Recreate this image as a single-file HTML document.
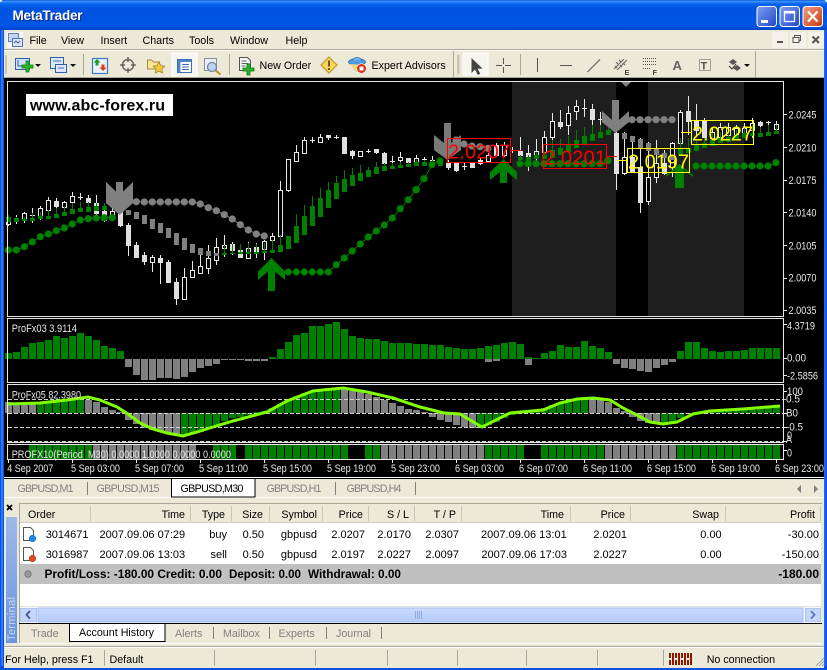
<!DOCTYPE html>
<html><head><meta charset="utf-8"><title>MetaTrader</title>
<style>
html,body{margin:0;padding:0;background:#ECE9D8;width:827px;height:670px;overflow:hidden}
svg{display:block;position:absolute;left:0;top:0}
text{font-family:"Liberation Sans",sans-serif;font-size:10.7px;fill:#000;white-space:pre}
.n{font-size:11px}
.r{text-anchor:end}
.g{fill:#808080}
.b{font-weight:bold;font-size:12px}
.w{fill:#e8e8e8;font-size:11px}
.big{font-size:20px}
.c rect,.c line,.crisp{shape-rendering:crispEdges}
</style></head><body>
<svg xmlns="http://www.w3.org/2000/svg" width="827" height="670" viewBox="0 0 827 670">
<defs>
<linearGradient id="tb" x1="0" y1="0" x2="0" y2="1">
<stop offset="0" stop-color="#0A5BD8"/><stop offset=".05" stop-color="#3D95FF"/><stop offset=".12" stop-color="#0A66EE"/><stop offset=".3" stop-color="#0053E0"/><stop offset=".85" stop-color="#0055E5"/><stop offset="1" stop-color="#0044C8"/>
</linearGradient>
<linearGradient id="tm" x1="0" y1="0" x2="0" y2="1"><stop offset="0" stop-color="#9DB9EB"/><stop offset="1" stop-color="#6A93DF"/></linearGradient>
<linearGradient id="sb" x1="0" y1="0" x2="0" y2="1"><stop offset="0" stop-color="#C9DAFC"/><stop offset="1" stop-color="#B5CCF8"/></linearGradient>
<linearGradient id="bb" x1="0" y1="0" x2="1" y2="1"><stop offset="0" stop-color="#7FA0F0"/><stop offset="1" stop-color="#1F45C8"/></linearGradient>
<linearGradient id="rb" x1="0" y1="0" x2="1" y2="1"><stop offset="0" stop-color="#F0A080"/><stop offset="1" stop-color="#C83A10"/></linearGradient>
</defs>

<!-- window frame -->
<g class="c">
<rect x="0" y="0" width="827" height="670" fill="#0A4FE0"/>
<rect x="1" y="30" width="2" height="636" fill="#2A7AF5"/>
<rect x="824" y="30" width="2" height="636" fill="#1A66EE"/>
<rect x="0" y="0" width="827" height="30" fill="url(#tb)"/>
<rect x="0" y="0" width="2" height="1" fill="#fff"/><rect x="0" y="1" width="1" height="1" fill="#fff"/>
<rect x="825" y="0" width="2" height="1" fill="#fff"/><rect x="826" y="1" width="1" height="1" fill="#fff"/>
<rect x="4" y="30" width="820" height="638" fill="#ECE9D8"/>
<rect x="4" y="50" width="820" height="1" fill="#fff"/>
<rect x="4" y="49" width="820" height="1" fill="#ACA899"/>
<rect x="4" y="77" width="820" height="1" fill="#ACA899"/>
</g>

<!-- title -->
<text x="13.5" y="21" style="font-size:13.5px;font-weight:bold;fill:#0A2A80" textLength="70">MetaTrader</text>
<text x="12.5" y="20" style="font-size:13.5px;font-weight:bold;fill:#fff" textLength="70">MetaTrader</text>
<g>
<rect x="757" y="6.5" width="19.5" height="20" rx="3" fill="url(#bb)" stroke="#fff"/>
<rect x="761" y="20" width="7" height="3" fill="#fff"/>
<rect x="780" y="6.5" width="19.5" height="20" rx="3" fill="url(#bb)" stroke="#fff"/>
<rect x="784.5" y="11.5" width="10" height="10" fill="none" stroke="#fff" stroke-width="1.3"/><rect x="784" y="11" width="11" height="2.5" fill="#fff"/>
<rect x="803" y="6.5" width="19.5" height="20" rx="3" fill="url(#rb)" stroke="#fff"/>
<path d="M808 11.5l9.5 10M817.5 11.5l-9.5 10" stroke="#fff" stroke-width="2.2"/>
</g>

<!-- menu -->
<g>
<rect x="7" y="32" width="16" height="16" fill="#F6F8FC"/>
<rect x="8.5" y="33.5" width="10" height="8" fill="#C5D6F2" stroke="#5B7FC0"/>
<rect x="12.5" y="38.5" width="10" height="8" fill="#DCE6F8" stroke="#4F75B8"/>
<path d="M14 43l2-2 2 2 2-2" stroke="#3A5FA8" fill="none"/>
</g>
<text x="29.5" y="44">File</text>
<text x="61" y="44">View</text>
<text x="100.5" y="44">Insert</text>
<text x="142.5" y="44">Charts</text>
<text x="189" y="44">Tools</text>
<text x="230" y="44">Window</text>
<text x="285.5" y="44">Help</text>
<g class="c">
<rect x="772" y="32" width="16" height="16" fill="#F4F2E8"/><rect x="777" y="41" width="6" height="2" fill="#555"/>
<rect x="790" y="32" width="16" height="16" fill="#F4F2E8"/><rect x="794.5" y="35.5" width="6" height="5" fill="none" stroke="#555"/><rect x="793" y="37.5" width="6" height="5" fill="#F4F2E8" stroke="#555"/>
<rect x="808" y="32" width="16" height="16" fill="#F4F2E8"/>
</g>
<path d="M812.5 36.5l6.5 6.5M819 36.5l-6.5 6.5" stroke="#555" stroke-width="2"/>

<!-- toolbar -->
<g class="c">
<rect x="5" y="55" width="2" height="19" fill="#C8C5B2"/>
<rect x="83" y="54" width="1" height="21" fill="#ACA899"/>
<rect x="229" y="54" width="1" height="21" fill="#ACA899"/>
<rect x="453" y="51" width="1" height="26" fill="#ACA899"/>
<rect x="457" y="55" width="2.5" height="19" fill="#C8C5B2"/>
<rect x="520" y="54" width="1" height="21" fill="#ACA899"/>
<rect x="755" y="51" width="1" height="26" fill="#ACA899"/>
<rect x="172" y="53" width="25" height="23" fill="#F6F5EE" stroke="#fff"/>
<rect x="463" y="53" width="25" height="22" fill="#F6F5EE" stroke="#fff"/>
</g>
<!-- new chart -->
<rect x="15.5" y="58.5" width="14" height="11" fill="#CFE0F8" stroke="#2F5FA8"/>
<path d="M18 60v6h8" stroke="#2F5FA8" fill="none"/>
<path d="M26 61h3v4h4v3h-4v4h-3v-4h-4v-3h4z" fill="#2CB52C" stroke="#0B7A0B" stroke-width=".8"/>
<path d="M35 64h6l-3 3z" fill="#111"/>
<!-- profiles -->
<rect x="50.5" y="57.5" width="13" height="11" fill="#DCE8FA" stroke="#2F5FA8"/>
<rect x="55.5" y="64.5" width="11" height="8" fill="#DCE8FA" stroke="#2F5FA8"/>
<path d="M53 61h8M58 68h6" stroke="#3B6BB5"/>
<path d="M70 64h6l-3 3z" fill="#111"/>
<!-- market/arrows -->
<rect x="92.5" y="58.5" width="15" height="15" fill="#EAF1FB" stroke="#3E79C8" stroke-width="1.2"/>
<path d="M97 59l3.5 3.5H98.500v3h-3v-3h-2z" fill="#1F9A1F"/>
<path d="M103 71l-3.500-3.500h2v-3h3v3h2z" fill="#D8431A"/>
<!-- crosshair -->
<circle cx="128" cy="65" r="5.500" fill="none" stroke="#666" stroke-width="1.500"/>
<path d="M128 57v5M128 68v5M120 65h5M131 65h5" stroke="#555" stroke-width="1.300"/>
<!-- folder star -->
<path d="M147.500 60v9h12v-7h-6l-2-2z" fill="#F8E59A" stroke="#A88F3A"/>
<path d="M159 62l1.800 3.600 4 .6-2.900 2.800.7 4-3.600-1.900-3.600 1.900.7-4-2.900-2.800 4-.6z" fill="#F3C93A" stroke="#A8862A" stroke-width=".8"/>
<!-- navigator -->
<rect x="177.500" y="59.500" width="14" height="13" fill="#fff" stroke="#3E6FB5"/>
<rect x="178" y="60" width="13" height="2" fill="#4E84C8"/>
<rect x="178" y="62" width="2.500" height="10" fill="#4E84C8"/>
<path d="M182 64.500h7M182 67h7M182 69.500h7" stroke="#3E6FB5"/>
<!-- zoom -->
<rect x="204.500" y="58.500" width="12" height="12" fill="#E8EEF6" stroke="#8A8F98"/>
<circle cx="212" cy="67" r="4.500" fill="#BFD3EC" stroke="#6E86A8" stroke-width="1.300"/>
<path d="M215.500 70.500l5 4" stroke="#B8922A" stroke-width="2"/>
<!-- new order -->
<path d="M239.500 57.500h8l3 3v10h-11z" fill="#F4F4F4" stroke="#555"/>
<path d="M241.500 61h5M241.500 63.500h7M241.500 66h4" stroke="#666"/>
<path d="M247 64h3v4h4v3h-4v4h-3v-4h-4v-3h4z" fill="#2CB52C" stroke="#0B7A0B" stroke-width=".8"/>
<text x="259.500" y="69">New Order</text>
<!-- warning -->
<path d="M329 57l8 8-8 8-8-8z" fill="#F6D55A" stroke="#C49A2A" stroke-width="1.200"/>
<rect x="328" y="60.500" width="2" height="6" fill="#6A5A20"/><rect x="328" y="68" width="2" height="2" fill="#6A5A20"/>
<!-- expert -->
<ellipse cx="357" cy="62" rx="8.500" ry="3.500" fill="#4C9BE0" stroke="#2A6AA8" stroke-width=".7"/>
<path d="M352.500 60.500c1-4 8-4 9 0" fill="#6FB3EA" stroke="#2A6AA8" stroke-width=".7"/>
<path d="M350 64l6 8h8l-1-7z" fill="#F2D878"/>
<circle cx="361.500" cy="68.500" r="4.800" fill="#E02A10" stroke="#fff" stroke-width=".6"/><rect x="359.500" y="66.500" width="4" height="4" fill="#fff"/>
<text x="371.500" y="69">Expert Advisors</text>
<!-- right tools -->
<path d="M471.500 58v15l3.500-3.500 2.800 5.500 2.500-1.200-2.700-5.200h5z" fill="#444"/>
<path d="M503.500 58v6M503.500 67v6M496 65.500h6M505 65.500h6" stroke="#555" class="crisp"/>
<rect x="537" y="58" width="1.200" height="14" fill="#555" class="crisp"/>
<rect x="560" y="65" width="12" height="1.200" fill="#555" class="crisp"/>
<path d="M587.500 72L600 59.500" stroke="#777" stroke-width="1.300"/>
<path d="M614 69l10-10M617 70l10-10M616 62l2 2M619 60l2 2M615 66l2 2M620 65l2 2M623 63l2 2" stroke="#666" stroke-width="1.100"/>
<text x="624.500" y="75" style="font-size:7.500px;font-weight:bold;fill:#444">E</text>
<path d="M643 58.500h13M643 61.500h13M643 64.500h13M643 68.500h8" stroke="#555" stroke-dasharray="1 1" class="crisp"/>
<text x="652.500" y="75" style="font-size:7.500px;font-weight:bold;fill:#444">F</text>
<text x="672.500" y="70" style="font-size:13px;font-weight:bold;fill:#666">A</text>
<rect x="699.500" y="59.500" width="11" height="11" fill="none" stroke="#555" stroke-dasharray="1 1" class="crisp"/>
<text x="700.500" y="69.500" style="font-size:11px;font-weight:bold;fill:#555">T</text>
<path d="M733 59l4 3-4 3-4-3zM737 65l4 3-4 3-4-3z" fill="#555"/>
<path d="M729 66l3 3 4-5" stroke="#333" fill="none"/>
<path d="M744 64h6l-3 3z" fill="#111"/>

<!-- chart area -->
<g class="c" id="chart">
<rect x="4" y="78" width="820" height="400" fill="#000"/>
<rect x="512" y="82" width="104" height="234" fill="#1E1E1E"/>
<rect x="648" y="82" width="96" height="234" fill="#1E1E1E"/>
</g>
<g class="c" id="candles"></g>
<g id="dots"></g>
<g id="gbars" class="c"></g>
<g id="arrows">
<polygon fill="#808080" points="106,182 116,191.500 116,182 123,182 123,191.500 133,182 133,203 119.500,215 106,203"/>
<polygon fill="#008000" points="258,280 258,271.500 271.500,258 285,271.500 285,280 275,271.500 275,291 268,291 268,271.500"/>
<polygon fill="#808080" opacity=".95" points="434,135 444,143 444,123 451,123 451,143 461,135 461,150 447.500,160 434,150"/>
<polygon fill="#008000" points="490,172 503.500,159 517,172 517,180 507,172 507,183 500,183 500,172 490,180"/>
<polygon fill="#808080" points="602,111 612,120 612,100 619,100 619,120 629,111 629,122 615.500,133 602,122"/>
<polygon fill="#808080" points="621,82 631,82 626,87"/>
<polygon fill="#008000" points="666,175 679.500,164 693,175 693,177 684,170 684,188 675,188 675,170 666,177"/>
</g>
<g id="ind" class="c"></g>
<g class="c" fill="none" stroke="#E8E8E8">
<rect x="7.500" y="81.500" width="776" height="235"/>
<rect x="7.500" y="318.500" width="776" height="64"/>
<rect x="7.500" y="384.500" width="776" height="58"/>
<rect x="7.500" y="444.500" width="776" height="15"/>
</g>
<g class="c" id="ticks"></g>
<polyline fill="none" stroke="#80FF00" stroke-width="3" points="8,404 40,403 67,400 88,397 100,400 117,407 128,414 140,423 153,429 167,433 183,436 197,432 213,427 233,421 267,412 287,401 313,391 343,388 367,392 393,398 420,407 444,413"/>
<polyline fill="none" stroke="#80FF00" stroke-width="3" points="444,413 460,414 480,426 482,427 510,413 543,410 560,403 577,399 593,398 610,400 623,408 637,415 650,422 663,424 677,422 693,414 710,411 743,409 780,406"/>

<!-- label boxes -->
<g class="c" fill="none">
<rect x="447.500" y="138.500" width="63" height="24" stroke="#FF0000"/>
<rect x="543.500" y="144.500" width="63" height="24" stroke="#FF0000"/>
<rect x="627.500" y="148.500" width="62" height="24" stroke="#FFFF00"/>
<rect x="691.500" y="120.500" width="62" height="24" stroke="#FFFF00"/>
<rect x="511" y="150" width="10" height="1" fill="#FF0000"/>
<rect x="607" y="156" width="10" height="1" fill="#FF0000"/>
<rect x="617" y="160" width="10" height="1" fill="#FFFF00"/>
<rect x="681" y="132" width="10" height="1" fill="#FFFF00"/>
</g>
<text class="big" x="448" y="158.500" style="fill:#FF0000" textLength="62">2.0207</text>
<text class="big" x="544" y="164.500" style="fill:#FF0000" textLength="62">2.0201</text>
<text class="big" x="628" y="168.500" style="fill:#FFFF00" textLength="61">2.0197</text>
<text class="big" x="692" y="140.500" style="fill:#FFFF00" textLength="61">2.0227</text>

<!-- website -->
<rect x="26" y="94" width="147" height="22" fill="#fff" class="crisp"/>
<text x="30" y="110.500" style="font-size:16px;font-weight:bold" textLength="135">www.abc-forex.ru</text>

<!-- axis prices -->
<g>
<text class="w" x="788.500" y="118.500" textLength="28" lengthAdjust="spacingAndGlyphs">2.0245</text>
<text class="w" x="788.500" y="151.500" textLength="28" lengthAdjust="spacingAndGlyphs">2.0210</text>
<text class="w" x="788.500" y="184" textLength="28" lengthAdjust="spacingAndGlyphs">2.0175</text>
<text class="w" x="788.500" y="216.500" textLength="28" lengthAdjust="spacingAndGlyphs">2.0140</text>
<text class="w" x="788.500" y="249.500" textLength="28" lengthAdjust="spacingAndGlyphs">2.0105</text>
<text class="w" x="788.500" y="281.500" textLength="28" lengthAdjust="spacingAndGlyphs">2.0070</text>
<text class="w" x="788.500" y="314" textLength="28" lengthAdjust="spacingAndGlyphs">2.0035</text>
<text class="w" x="787" y="329.500" textLength="28" lengthAdjust="spacingAndGlyphs">4.3719</text>
<text class="w" x="787" y="361.500" textLength="19" lengthAdjust="spacingAndGlyphs">0.00</text>
<text class="w" x="787" y="379.500" textLength="31" lengthAdjust="spacingAndGlyphs">-2.5856</text>
<text class="w" x="787" y="395" textLength="16" lengthAdjust="spacingAndGlyphs">100</text>
<text class="w" x="786" y="402.500" textLength="14" lengthAdjust="spacingAndGlyphs">0.5</text>
<text class="w" x="786" y="416.500" textLength="12" lengthAdjust="spacingAndGlyphs">B0</text>
<text class="w" x="786" y="430.500" textLength="17" lengthAdjust="spacingAndGlyphs">-0.5</text>
<text class="w" x="787" y="439" textLength="5" lengthAdjust="spacingAndGlyphs">0</text>
<text class="w" x="786" y="443" textLength="6" lengthAdjust="spacingAndGlyphs">A</text>
<text class="w" x="787" y="456.500" textLength="5" lengthAdjust="spacingAndGlyphs">0</text>
<text class="w" x="11.700" y="332" textLength="65.300" lengthAdjust="spacingAndGlyphs">ProFx03 3.9114</text>
<text class="w" x="11.700" y="398.500" textLength="69.300" lengthAdjust="spacingAndGlyphs">ProFx05 82.3980</text>
<text class="w" x="11.700" y="458" textLength="219.300" lengthAdjust="spacingAndGlyphs">PROFX10(Period  M30) 0.0000 1.0000 0.0000 0.0000</text>
<text class="w" x="7.300" y="472" textLength="46" lengthAdjust="spacingAndGlyphs">4 Sep 2007</text>
<text class="w" x="71" y="472" textLength="49" lengthAdjust="spacingAndGlyphs">5 Sep 03:00</text>
<text class="w" x="135" y="472" textLength="49" lengthAdjust="spacingAndGlyphs">5 Sep 07:00</text>
<text class="w" x="199" y="472" textLength="49" lengthAdjust="spacingAndGlyphs">5 Sep 11:00</text>
<text class="w" x="263" y="472" textLength="49" lengthAdjust="spacingAndGlyphs">5 Sep 15:00</text>
<text class="w" x="327" y="472" textLength="49" lengthAdjust="spacingAndGlyphs">5 Sep 19:00</text>
<text class="w" x="391" y="472" textLength="49" lengthAdjust="spacingAndGlyphs">5 Sep 23:00</text>
<text class="w" x="455" y="472" textLength="49" lengthAdjust="spacingAndGlyphs">6 Sep 03:00</text>
<text class="w" x="519" y="472" textLength="49" lengthAdjust="spacingAndGlyphs">6 Sep 07:00</text>
<text class="w" x="583" y="472" textLength="49" lengthAdjust="spacingAndGlyphs">6 Sep 11:00</text>
<text class="w" x="647" y="472" textLength="49" lengthAdjust="spacingAndGlyphs">6 Sep 15:00</text>
<text class="w" x="711" y="472" textLength="49" lengthAdjust="spacingAndGlyphs">6 Sep 19:00</text>
<text class="w" x="775" y="472" textLength="49" lengthAdjust="spacingAndGlyphs">6 Sep 23:00</text>
</g>

<!-- chart tabs -->
<g class="c">
<rect x="4" y="477" width="820" height="1" fill="#fff"/>
<rect x="4" y="478" width="820" height="1" fill="#000"/>
<rect x="4" y="479" width="820" height="18" fill="#ECE9D8"/>
<rect x="4" y="497" width="820" height="1" fill="#fff"/>
<rect x="171.500" y="478.500" width="83.500" height="18.500" fill="#fff" stroke="#000"/>
<rect x="87" y="482" width="1" height="13" fill="#808080"/>
<rect x="335" y="482" width="1" height="13" fill="#808080"/>
<rect x="415" y="482" width="1" height="13" fill="#808080"/>
</g>
<text x="17.500" y="492" class="g" textLength="56">GBPUSD,M1</text>
<text x="96.500" y="492" class="g" textLength="63">GBPUSD,M15</text>
<text x="180.500" y="492" textLength="63">GBPUSD,M30</text>
<text x="266.500" y="492" class="g" textLength="55">GBPUSD,H1</text>
<text x="346.500" y="492" class="g" textLength="55">GBPUSD,H4</text>
<path d="M801 485v8l-4-4z" fill="#808080"/><path d="M814 485v8l4-4z" fill="#808080"/>

<!-- terminal -->
<g class="c">
<rect x="6" y="517" width="11" height="126" fill="url(#tm)"/>
<rect x="19" y="503" width="803" height="1" fill="#ACA899"/>
<rect x="19" y="503" width="1" height="140" fill="#ACA899"/>
<rect x="20" y="504" width="801" height="18" fill="#ECE9D8"/>
<rect x="20" y="522" width="801" height="1" fill="#D0CDBA"/>
<rect x="20" y="523" width="801" height="84" fill="#fff"/>
<rect x="20" y="564" width="801" height="20" fill="#C0C0C0"/>
<rect x="20" y="606" width="801" height="1" fill="#E6E3D2"/>
<rect x="20" y="607" width="801" height="16" fill="#F3F6FD"/>
<rect x="19" y="623" width="803" height="1" fill="#000"/>
<rect x="38" y="608" width="765" height="14" fill="url(#sb)" stroke="#A8C0EE"/>
<rect x="20.500" y="608.500" width="16" height="13" fill="#C5D6FA" stroke="#AFC5F0"/>
<rect x="805.500" y="608.500" width="15" height="13" fill="#C5D6FA" stroke="#AFC5F0"/>
<rect x="415" y="611" width="1" height="8" fill="#8FA9DC"/><rect x="417" y="611" width="1" height="8" fill="#8FA9DC"/><rect x="419" y="611" width="1" height="8" fill="#8FA9DC"/><rect x="421" y="611" width="1" height="8" fill="#8FA9DC"/>
<rect x="90" y="506" width="1" height="15" fill="#C8C5B2"/><rect x="190" y="506" width="1" height="15" fill="#C8C5B2"/><rect x="231" y="506" width="1" height="15" fill="#C8C5B2"/><rect x="269" y="506" width="1" height="15" fill="#C8C5B2"/><rect x="322" y="506" width="1" height="15" fill="#C8C5B2"/><rect x="368" y="506" width="1" height="15" fill="#C8C5B2"/><rect x="414" y="506" width="1" height="15" fill="#C8C5B2"/><rect x="461" y="506" width="1" height="15" fill="#C8C5B2"/><rect x="570" y="506" width="1" height="15" fill="#C8C5B2"/><rect x="630" y="506" width="1" height="15" fill="#C8C5B2"/><rect x="725" y="506" width="1" height="15" fill="#C8C5B2"/><rect x="820" y="506" width="1" height="15" fill="#C8C5B2"/>
<rect x="69.500" y="623.500" width="95.500" height="18" fill="#fff" stroke="#000"/>
<rect x="213" y="627" width="1" height="12" fill="#808080"/><rect x="269" y="627" width="1" height="12" fill="#808080"/><rect x="326" y="627" width="1" height="12" fill="#808080"/><rect x="381" y="627" width="1" height="12" fill="#808080"/>
<rect x="19" y="643" width="803" height="1" fill="#fff"/>
<rect x="4" y="646" width="820" height="1" fill="#ACA899"/>
<rect x="4" y="647" width="820" height="1" fill="#fff"/>
<rect x="104" y="650" width="1" height="16" fill="#ACA899"/><rect x="214" y="650" width="1" height="16" fill="#ACA899"/><rect x="315" y="650" width="1" height="16" fill="#ACA899"/><rect x="387" y="650" width="1" height="16" fill="#ACA899"/><rect x="457" y="650" width="1" height="16" fill="#ACA899"/><rect x="526" y="650" width="1" height="16" fill="#ACA899"/><rect x="597" y="650" width="1" height="16" fill="#ACA899"/><rect x="663" y="650" width="1" height="16" fill="#ACA899"/>
</g>
<path d="M7 505l5 5M12 505l-5 5" stroke="#000" stroke-width="1.800"/>
<text transform="translate(15 641) rotate(-90)" style="font-size:11px;fill:#C8D6F2" textLength="44">Terminal</text>
<path d="M30 611l-3.500 3.800 3.500 3.800" fill="none" stroke="#3A5A9C" stroke-width="1.800"/>
<path d="M811 611l3.500 3.800-3.500 3.800" fill="none" stroke="#5A78B8" stroke-width="1.800"/>

<!-- table header -->
<text x="28" y="518">Order</text>
<text x="185" y="518" class="r">Time</text>
<text x="225" y="518" class="r">Type</text>
<text x="263" y="518" class="r">Size</text>
<text x="317" y="518" class="r">Symbol</text>
<text x="363" y="518" class="r">Price</text>
<text x="409" y="518" class="r">S / L</text>
<text x="456" y="518" class="r">T / P</text>
<text x="564" y="518" class="r">Time</text>
<text x="625" y="518" class="r">Price</text>
<text x="719" y="518" class="r">Swap</text>
<text x="815" y="518" class="r">Profit</text>

<!-- rows -->
<g>
<path d="M23.500 527.500h7l3 3v10h-10z" fill="#fff" stroke="#555"/><circle cx="32.500" cy="538.500" r="3.300" fill="#1E8AE0" stroke="#0E5FA8" stroke-width=".5"/>
<path d="M23.500 547.500h7l3 3v10h-10z" fill="#fff" stroke="#555"/><circle cx="32.500" cy="558.500" r="3.300" fill="#E04A1E" stroke="#A83010" stroke-width=".5"/>
<circle cx="28" cy="574" r="3.200" fill="#999" stroke="#777"/>
</g>
<g class="n">
<text class="n" x="45.700" y="538">3014671</text><text class="n" x="99.500" y="538">2007.09.06 07:29</text><text class="n r" x="227" y="538">buy</text><text class="n r" x="264" y="538">0.50</text><text class="n r" x="317" y="538">gbpusd</text><text class="n r" x="365" y="538">2.0207</text><text class="n r" x="411" y="538">2.0170</text><text class="n r" x="459" y="538">2.0307</text><text class="n r" x="566.700" y="538">2007.09.06 13:01</text><text class="n r" x="627" y="538">2.0201</text><text class="n r" x="721.700" y="538">0.00</text><text class="n r" x="819" y="538">-30.00</text>
<text class="n" x="45.700" y="558">3016987</text><text class="n" x="99.500" y="558">2007.09.06 13:03</text><text class="n r" x="227" y="558">sell</text><text class="n r" x="264" y="558">0.50</text><text class="n r" x="317" y="558">gbpusd</text><text class="n r" x="365" y="558">2.0197</text><text class="n r" x="411" y="558">2.0227</text><text class="n r" x="459" y="558">2.0097</text><text class="n r" x="567" y="558">2007.09.06 17:03</text><text class="n r" x="627" y="558">2.0227</text><text class="n r" x="721.700" y="558">0.00</text><text class="n r" x="819" y="558">-150.00</text>
</g>
<text class="b" x="44.500" y="578" textLength="177.500" lengthAdjust="spacingAndGlyphs">Profit/Loss: -180.00 Credit: 0.00</text>
<text class="b" x="229" y="578" textLength="72" lengthAdjust="spacingAndGlyphs">Deposit: 0.00</text>
<text class="b" x="308" y="578" textLength="93" lengthAdjust="spacingAndGlyphs">Withdrawal: 0.00</text>
<text class="b r" x="819" y="578">-180.00</text>

<!-- bottom tabs -->
<text x="31" y="637" class="g">Trade</text>
<text x="79" y="636" textLength="75">Account History</text>
<text x="175" y="637" class="g">Alerts</text>
<text x="223" y="637" class="g">Mailbox</text>
<text x="278.500" y="637" class="g">Experts</text>
<text x="336" y="637" class="g">Journal</text>

<!-- status -->
<text x="5" y="663">For Help, press F1</text>
<text x="109.500" y="663">Default</text>
<text x="706.700" y="663">No connection</text>
<g id="st" class="c"></g>
<path d="M824 658l-8 8M824 661l-5 5M824 664l-2 2" stroke="#ACA899"/>
</svg>
<script>
(function(){
function R(x,y,w,h,f){return '<rect x="'+x+'" y="'+y+'" width="'+w+'" height="'+h+'" fill="'+f+'"/>';}
var s='';
function cand(off,l){l.forEach(function(a){var k=a[0],x=8*k,hi=Math.round(a[1]/3+off),t=Math.round(a[2]/3+off),b=Math.round(a[3]/3+off),lo=Math.round(a[4]/3+off);
 s+=R(x,hi,1,lo-hi,'#E8E8E8');
 if(a[5]==2){s+=R(x-2,t,5,1,'#E8E8E8');return;}
 if(b<=t)b=t+1;
 if(a[5]==1){s+=R(x-2,t,5,b-t+1,'#E8E8E8')+R(x-1,t+1,3,Math.max(b-t-1,0),'#000');}
 else s+=R(x-2,t,5,b-t+1,'#E0E0E0');
});}
cand(100,[[1,345,360,372,378,1],[2,346,355,362,372,1],[3,335,340,360,368,1],[4,325,345,345,370,2],[5,318,325,347,360,1],[6,290,300,330,345,1],[7,295,303,318,340,0],[8,302,306,320,345,1],[9,277,289,306,325,1],[10,280,290,290,300,2],[11,284,294,306,320,0],[12,286,309,340,350,0],[13,310,333,360,365,0],[14,320,333,350,360,1],[15,295,335,375,380,0],[16,370,375,435,468,0],[17,425,435,471,473,0],[18,456,465,483,495,0],[19,465,472,485,516,1],[20,465,474,486,552,0],[21,480,486,546,550,0],[22,535,546,594,614,0],[23,505,532,596,600,1],[24,484,511,530,535,1],[25,445,499,518,520,1],[26,435,475,503,522,1],[27,415,442,480,495,1],[28,405,435,445,470,1],[29,425,432,450,465,0],[30,448,450,470,475,0],[31,425,445,473,475,1],[32,430,441,460,475,0],[33,420,424,446,480,1],[34,400,408,419,460,1],[35,243,271,407,455,1],[36,178,178,269,275,1],[37,135,155,182,185,1],[38,112,121,158,160,1],[39,110,119,119,128,2],[40,102,111,126,130,1],[41,105,105,111,120,0],[42,104,110,110,118,2],[43,111,111,159,160,0],[44,150,153,165,177,0],[45,153,153,167,170,1],[46,147,153,153,160,2],[47,148,148,157,162,0],[48,155,159,188,190,0],[49,168,183,183,200,2],[50,155,172,180,200,1],[51,175,175,187,200,0]]);
cand(80,[[52,225,234,246,258,1],[53,230,238,238,255,2],[54,228,240,240,250,2],[56,240,250,262,270,0],[57,245,250,270,275,0],[58,245,258,258,270,2],[59,245,248,260,265,0],[60,235,240,250,255,0],[61,220,225,242,245,1],[62,190,195,225,230,0],[63,185,195,225,232,1],[64,200,210,210,220,2],[65,170,213,225,240,0],[66,195,220,245,272,0],[67,178,213,232,250,1],[68,153,172,215,230,1],[69,98,124,172,205,1],[70,90,126,137,147,0],[71,78,100,134,165,1],[72,60,78,94,120,1],[73,58,83,83,110,2],[74,72,87,117,135,0],[75,95,117,117,155,2],[77,100,160,278,330,0],[78,155,232,280,285,1],[79,170,230,275,280,0],[80,175,262,365,400,0],[81,185,292,362,375,1],[82,180,250,290,310,1],[83,210,250,280,285,0],[84,185,190,260,290,1],[85,90,96,188,215,1],[86,48,94,122,165,0],[87,72,120,150,180,0],[88,115,122,170,175,0],[89,140,155,175,180,1],[90,130,140,170,175,1],[91,130,140,165,170,1],[92,135,145,170,175,1],[93,130,143,165,170,1],[94,115,130,150,175,1],[95,122,126,135,165,0],[96,122,127,127,160,2],[97,122,133,147,160,1]]);
document.getElementById('candles').innerHTML=s;

/* green / gray band */
s='';
function band(off,l){l.forEach(function(a){var x=8*a[0],c=a[4]?'#808080':'#008000',t=Math.round(a[2]/3+off),b=Math.round(a[3]/3+off);
 if(a[1]<a[2])s+=R(x,Math.round(a[1]/3+off),1,t-Math.round(a[1]/3+off),c);
 s+=R(x-2,t,5,b-t,c);});}
band(100,[[1,345,352,365],[2,350,355,365],[3,350,357,363],[4,340,355,362],[5,335,348,358],[6,330,347,358],[7,325,341,353],[8,320,336,349],[9,310,327,343],[10,305,323,337],[11,305,322,335],[12,310,319,332],[13,310,319,330],
[16,330,330,345,1],[17,336,336,357,1],[18,345,345,372,1],[19,357,357,387,1],[20,369,369,399,1],[21,384,384,414,1],[22,399,399,435,1],[23,414,414,450,1],[24,432,432,459,1],[25,444,444,465,1],[26,453,453,468,1],[27,459,459,468,1],
[28,435,459,465],[29,432,458,463],[30,432,457,462],[31,428,456,461],[32,432,456,461],[33,430,454,459],[34,420,450,459],[35,405,435,456],[36,408,408,447],[37,342,378,429],[38,315,348,405],[39,288,318,378],[40,264,294,351],[41,246,270,324],[42,228,249,297],[43,210,237,276],[44,204,225,258],[45,195,219,243],[46,200,210,231],[47,186,201,222],[48,190,198,213],[49,190,198,207],[50,185,195,204],[51,185,191,201]]);
band(80,[[52,240,246,258],[53,240,246,258],[54,240,246,258],[55,240,246,258],[65,225,232,240],[66,225,232,245],[67,215,225,238],[68,215,225,237],[69,180,210,235],[70,178,205,225],[71,168,195,215],[72,150,180,205],[73,140,168,192],[74,135,162,183],[75,135,156,174],[76,135,150,165],
[78,159,159,177,1],[79,168,168,186,1],[80,177,177,204,1],[81,189,189,213,1],[82,207,207,225,1],[83,219,219,234,1],[84,225,225,240,1],[85,175,205,225],[86,175,205,220],[87,170,195,213],[88,175,190,204],[89,160,180,198],[90,155,175,190],[91,150,170,185],[92,150,165,180],[93,140,160,175],[94,135,158,168],[95,140,160,170],[96,135,157,168],[97,135,153,163]]);
document.getElementById('gbars').innerHTML=s;

/* dots */
s='';
function dots(c,p,off,ox){var pts=p.map(function(q){return [(q[0]/3+ox).toFixed(1),(q[1]/3+off).toFixed(1)];});
 s+='<polyline fill="none" stroke="'+c+'" stroke-width="1" points="'+pts.join(' ')+'"/>';
 pts.forEach(function(q){s+='<circle cx="'+q[0]+'" cy="'+q[1]+'" r="3.6" fill="'+c+'"/>';});}
dots('#008000',[[25,450],[49,450],[73,440],[97,426],[121,410],[145,402],[169,392],[193,384],[217,372],[241,360],[265,356],[289,354],[313,353],[337,353]],100,0);
dots('#808080',[[385,305],[409,305],[433,306],[457,306],[481,306],[505,306],[529,306],[553,306],[577,306],[601,312],[625,323],[649,332],[673,344],[697,357],[721,374],[745,390],[769,402],[793,408]],100,0);
dots('#008000',[[865,516],[889,516],[913,516],[937,516],[961,516],[985,516],[1009,494],[1033,474],[1057,453],[1081,432],[1105,411],[1129,393],[1153,375],[1177,354],[1201,326],[1225,299],[1249,269]],100,0);
dots('#008000',[[18,329],[42,296],[66,254],[90,243]],80,410);
dots('#808080',[[138,180],[162,192],[186,198],[210,200],[234,205]],80,410);
dots('#008000',[[330,251],[354,251],[378,251],[402,251],[426,251],[450,251],[474,251],[498,251],[522,251],[546,251],[570,251],[594,242]],80,410);
dots('#808080',[[666,119],[690,119],[714,119],[738,119],[762,119],[786,119]],80,410);
dots('#008000',[[858,258],[882,258],[906,258],[930,258],[954,258],[978,258],[1002,258],[1026,258],[1050,258],[1074,258],[1098,248]],80,410);
document.getElementById('dots').innerHTML=s;

/* indicators */
s='';
var i1=[114,111,96,84,81,75,63,69,63,54,63,75,93,99,108,156,180,195,195,189,189,192,186,171,159,153,147,136,136,136,138,138,138,126,102,81,60,54,33,33,27,21,42,63,69,72,72,78,84,84,84,
87,87,90,90,96,99,102,102,99,93,90,84,81,87,126,129,114,108,90,96,96,78,93,99,111,147,159,162,168,171,159,150,141,108,81,81,99,108,111,108,108,105,99,99,99,99];
var z1=Math.round(131/3+315);
i1.forEach(function(v,n){var x=8*(n+1)-3,y=Math.round(v/3+315);
 if(y<z1)s+=R(x,y,7,z1-y,'#008000');else s+=R(x,z1,7,y-z1,'#808080');});
[[61,141],[62,138],[66,150]].forEach(function(a){s+=R(8*a[0]-3,z1,7,Math.round(a[1]/3+315)-z1,'#808080');});
var i2=[262,266,268,268,264,262,258,254,254,254,254,262,276,285,292,315,327,338,345,350,355,360,362,355,350,338,330,318,310,305,300,292,287,279,266,254,243,235,229,225,219,219,220,228,232,238,245,254,263,272,282,285,291,305,315,322,330,335,338,338,330,320,310,300,288,285,285,278,270,264,258,252,250,250,252,260,278,288,305,318,324,326,326,322,310,298,292,288,285,283,283,282,280,280,277,279,274];
var z2=413;
function gray2(k){return k<=4||(k>=11&&k<=22)||(k>=43&&k<=59)||(k>=74&&k<=82);}
i2.forEach(function(v,n){var k=n+1,x=8*k-3,y=Math.round(v/3+315),c=gray2(k)?'#808080':'#008000';
 if(y<z2)s+=R(x,y,7,z2-y,c);else s+=R(x,z2,7,Math.max(y-z2,1),c);});
[399,413,427,441].forEach(function(y){for(var x=8;x<783;x+=6)s+=R(x,y,4,1,'#D0D0D0');});
function col3(k){if(k<=3)return null;if(k<=11)return'#008000';if(k<=24)return'#808080';if(k<=26)return null;if(k<=29)return'#008000';if(k==30)return null;if(k<=43)return'#008000';if(k<=45)return null;if(k<=47)return'#008000';if(k<=60)return'#808080';if(k<=65)return'#008000';if(k<=67)return null;if(k<=75)return'#008000';if(k<=84)return'#808080';return'#008000';}
for(var k=1;k<=97;k++){var c=col3(k);if(c)s+=R(8*k-3,445,7,14,c);}
document.getElementById('ind').innerHTML=s;

/* ticks */
s='';
for(var x=8;x<783;x+=64)s+=R(x,460,1,3,'#E8E8E8');
[114,147,180,212,245,278,310,324,358,375,391,413,427,441,450].forEach(function(y){s+=R(784,y,3,1,'#E8E8E8');});
document.getElementById('ticks').innerHTML=s;

/* status red bars */
s='';
for(var j=0;j<8;j++){s+=R(669+j*3,653,2,5+(j%2)*2,'#8B1A00')+R(669+j*3,660,2,5,'#8B1A00');}
document.getElementById('st').innerHTML=s;
})();
</script>
</body></html>
